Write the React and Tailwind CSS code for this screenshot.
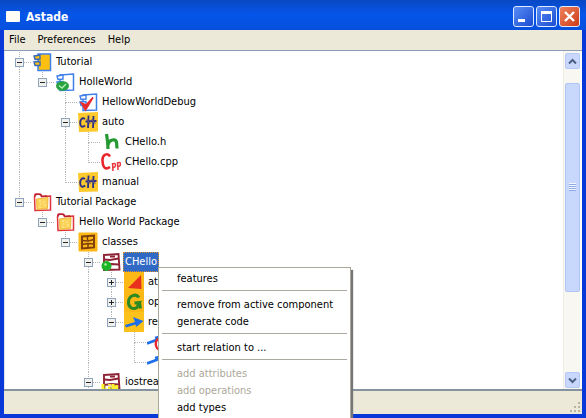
import React from "react";

const CppIcon = () => (
  <>
    <path d="M0 1 20 0v19.500L1 20z" fill="#fdc92c" />
    <path d="M7 7C4 5 2 8 2.200 11.500s2.300 4 5 2" fill="none" stroke="#2b2f86" strokeWidth="1.900" />
    <path d="m10.500 3.500-.5 12.500M15.500 4l-.5 12M7.500 9.500l11-.5" fill="none" stroke="#2b2f86" strokeWidth="1.800" />
    <path d="m8.500 7 4 5M13.500 7l4 5" fill="none" stroke="#6a5c7c" strokeWidth="1" />
  </>
);

const FolderIcon = () => (
  <>
    <path d="M2.500 5 3 2.500 8 2l1.500 2.500 9-.5V18L3 18.500z" fill="#fff" stroke="#e0343c" strokeWidth="1.500" />
    <path d="M4.500 7 16 5.500l-.5 11-10.500 1z" fill="#fbd25a" stroke="#f0b63a" />
    <path d="M3 4.500 4 2l5 .5 1 2 5-.5" fill="none" stroke="#b82036" strokeWidth="1.300" />
    <path d="M7 9h2M11 10h2M8 12h1M12 13h2M7 15h2" stroke="#fff0a8" />
  </>
);

const ComponentIcon = () => (
  <>
    <path d="M5 3 18.500 2v16L5 18.500z" fill="#fff" stroke="#3f80e8" strokeWidth="1.500" />
    <path d="m2 4 6-1v4l-5 .5zM2 10l6-.5v4H3z" fill="#fff" stroke="#3f80e8" strokeWidth="1.400" />
  </>
);

const ClassIcon = () => (
  <>
    <path d="M3 3 17.500 2l1 15.500L3 18z" fill="#fff" stroke="#8e2436" strokeWidth="1.900" />
    <path d="m3 7.500 6 .5 8.500-1.500M3 13l7-1 8 .5M9 4.500h5" fill="none" stroke="#8e2436" strokeWidth="1.800" />
  </>
);

const ICONS = {
  project: (
    <>
      <path d="M6 2h12.500v16.500H6z" fill="#fdc010" stroke="#3f80e8" strokeWidth="1.500" />
      <path d="m2 4 6-1v4l-5 .5zM2 10l6-.5v4H3z" fill="#fdc010" stroke="#3468b8" strokeWidth="1.400" />
    </>
  ),
  component: (
    <>
      <ComponentIcon />
      <ellipse cx="7.500" cy="14" rx="6.500" ry="4.800" fill="#27a340" />
      <path d="m4 13.500 3 2.500 4-4" fill="none" stroke="#b4ecb8" strokeWidth="1.400" />
    </>
  ),
  config: (
    <>
      <ComponentIcon />
      <path d="m3.500 11 4 7L15 5.500 8 13z" fill="#e82a2e" stroke="#e82a2e" strokeWidth="1.600" />
    </>
  ),
  cxx: <CppIcon />,
  header: (
    <path d="m5.500 2 1 7 .5 8M7 13c1-6 7.500-6.500 8.500-3l.5 6.500" fill="none" stroke="#259a33" strokeWidth="3.200" />
  ),
  source: (
    <>
      <path d="M9 4.500C7 .5 1 2 1.500 9s3 9 7.500 6" fill="none" stroke="#e8262c" strokeWidth="2.600" />
      <path d="m11.500 11 .5 8M11.500 12c3-2 4.500 2 1 3.500M16.500 10l.5 8M16.500 11c3-2 4.500 2 1 3.500" fill="none" stroke="#e8363c" strokeWidth="1.500" />
    </>
  ),
  folder: <FolderIcon />,
  classes: (
    <>
      <rect x="0.5" y="0.5" width="19" height="19" rx="1" fill="#fcb817" />
      <path d="m4 4.500 12-1v12L4 16.500z" fill="none" stroke="#7c3c0c" strokeWidth="1.900" />
      <path d="m4 8.500 6 .5 6-1.500M4 12.500l6-1 6 .5M9.500 5v3M10 12v3" fill="none" stroke="#7c3c0c" strokeWidth="1.500" />
    </>
  ),
  activeClass: (
    <>
      <ClassIcon />
      <circle cx="5.500" cy="14" r="5" fill="#1fb528" />
      <circle cx="4.500" cy="12.500" r="1.300" fill="#a8efa0" />
    </>
  ),
  attributes: (
    <>
      <rect width="20" height="20" fill="#fcb817" />
      <path d="m17 3 .5 14L4 16z" fill="#e8301c" />
    </>
  ),
  operations: (
    <>
      <rect width="20" height="20" fill="#fcb817" />
      <path d="M15 5.500C12 1 5 3.500 4.500 9.500S9 18 13 15.500l2.500-5-5 .5M15.500 10.500l1 6" fill="none" stroke="#2c8a20" strokeWidth="3" />
    </>
  ),
  relations: (
    <>
      <rect width="20" height="20" fill="#fcc21b" />
      <path d="m1 13 10-3-2-5 10.500 4-7.500 6-.5-2.500L2 15.500z" fill="#1d6fe8" />
    </>
  ),
  relationOut: (
    <>
      <path d="m0 11.500 8-3 5-2M8 6l4-1" stroke="#1d6fe8" strokeWidth="2.800" />
      <path d="M14 7C7 5 7 18 14 18" fill="none" stroke="#e8262c" strokeWidth="2.400" />
    </>
  ),
  relationIn: <path d="m0 11.500 8-3 5-2M8 6l4-1" stroke="#1d6fe8" strokeWidth="2.800" />,
  library: (
    <>
      <ClassIcon />
      <path d="M2 12v6h4M8.500 14.500V18M8.500 12v1M12 12v6h3.500v-3.500H12" fill="none" stroke="#fff22a" strokeWidth="3" />
      <path d="M4 12.500v4M10 14.500V18M14 12.500v1.500M17.500 15v3" fill="none" stroke="#80781c" strokeWidth="0.800" />
    </>
  ),
};

/* guides: one entry per ancestor column, then the node's own joint */
const ROWS = [
  { guides: ["tee"], icon: "project", label: "Tutorial", box: "minus" },
  { guides: ["bar", "end"], icon: "component", label: "HolleWorld", box: "minus" },
  { guides: ["bar", "none", "tee"], icon: "config", label: "HellowWorldDebug" },
  { guides: ["bar", "none", "tee"], icon: "cxx", label: "auto", box: "minus" },
  { guides: ["bar", "none", "bar", "tee"], icon: "header", label: "CHello.h" },
  { guides: ["bar", "none", "bar", "end"], icon: "source", label: "CHello.cpp" },
  { guides: ["bar", "none", "end"], icon: "cxx", label: "manual" },
  { guides: ["end"], icon: "folder", label: "Tutorial Package", box: "minus" },
  { guides: ["none", "end"], icon: "folder", label: "Hello World Package", box: "minus" },
  { guides: ["none", "none", "end"], icon: "classes", label: "classes", box: "minus" },
  { guides: ["none", "none", "none", "tee"], icon: "activeClass", label: "CHello", box: "minus", selected: true },
  { guides: ["none", "none", "none", "bar", "tee"], icon: "attributes", label: "at", box: "plus" },
  { guides: ["none", "none", "none", "bar", "tee"], icon: "operations", label: "op", box: "plus" },
  { guides: ["none", "none", "none", "bar", "end"], icon: "relations", label: "re", box: "minus" },
  { guides: ["none", "none", "none", "bar", "none", "tee"], icon: "relationOut", label: "" },
  { guides: ["none", "none", "none", "bar", "none", "end"], icon: "relationIn", label: "" },
  { guides: ["none", "none", "none", "tee"], icon: "library", label: "iostream", box: "minus" },
];

function Guide({ kind, box }) {
  const joint = kind === "tee" || kind === "end";
  const upper = kind === "none" ? "" : "border-l";
  const lower = kind === "bar" || kind === "tee" ? "border-l" : "";
  return (
    <span className="relative flex h-5 w-[23px] shrink-0 flex-col pl-[11px]">
      <span className={`h-[11px] border-dotted border-[#b4b4b4] ${upper} ${joint ? "border-b" : ""}`} />
      <span className={`h-[9px] border-dotted border-[#b4b4b4] ${lower}`} />
      {box && (
        <button
          type="button"
          aria-label={box === "plus" ? "Expand" : "Collapse"}
          className="absolute top-[6px] left-[7px] flex size-[9px] items-center justify-center border border-[#8ea4bc] bg-[#f1f0ea]"
        >
          <svg viewBox="0 0 5 5" className="size-[5px] shrink-0" shapeRendering="crispEdges" aria-hidden="true">
            <path d={box === "plus" ? "M0 2h5v1H0zM2 0h1v5H2z" : "M0 2h5v1H0z"} fill="#20242c" />
          </svg>
        </button>
      )}
    </span>
  );
}

function TreeRow({ row }) {
  const last = row.guides.length - 1;
  return (
    <li role="treeitem" aria-selected={!!row.selected} className="flex h-5 items-center whitespace-nowrap">
      {row.guides.map((kind, i) => (
        <Guide key={i} kind={kind} box={i === last ? row.box : undefined} />
      ))}
      <svg viewBox="0 0 20 20" className="ml-px size-5 shrink-0" aria-hidden="true">
        {ICONS[row.icon]}
      </svg>
      <span
        className={`ml-[2px] flex h-5 items-center ${
          row.selected ? "border border-dotted border-[#d9902f] bg-[#316ac5] px-px text-white" : "px-[2px]"
        }`}
      >
        {row.label}
      </span>
    </li>
  );
}

const MENU = [
  [{ label: "features" }],
  [{ label: "remove from active component" }, { label: "generate code" }],
  [{ label: "start relation to ..." }],
  [{ label: "add attributes", off: true }, { label: "add operations", off: true }, { label: "add types" }],
];

function ContextMenu() {
  return (
    <div
      role="menu"
      className="absolute top-[267px] bottom-0 left-[158px] w-[193px] border-t border-r border-l border-[#aca899] bg-white pt-[2px] shadow-[2px_3px_1px_#77777a]"
    >
      {MENU.map((group, g) => (
        <div key={g} role="group">
          {g > 0 && <hr className="mx-[3px] mt-[3px] mb-[5px] border-[#aca9a0]" />}
          {group.map((item) => (
            <button
              key={item.label}
              type="button"
              role="menuitem"
              disabled={item.off}
              className="flex h-[17px] w-full items-center pl-[18px] whitespace-nowrap disabled:text-[#aca899]"
            >
              {item.label}
            </button>
          ))}
        </div>
      ))}
    </div>
  );
}

function CaptionButton({ label, tone, children }) {
  return (
    <button
      type="button"
      aria-label={label}
      className={`flex size-[21px] items-center justify-center rounded-[3px] border border-[#dfe9ff] bg-linear-to-br ${tone}`}
    >
      <svg viewBox="0 0 19 19" className="size-[19px]" fill="none" stroke="#fff" aria-hidden="true">
        {children}
      </svg>
    </button>
  );
}

function ScrollButton({ label, d }) {
  return (
    <button
      type="button"
      aria-label={label}
      className="flex h-4 w-[15px] shrink-0 items-center justify-center rounded-[2px] border border-[#b5c8f4] bg-[#c8d7fb]"
    >
      <svg viewBox="0 0 9 7" className="h-[7px] w-[9px]" fill="none" stroke="#4d6185" strokeWidth="2" aria-hidden="true">
        <path d={d} />
      </svg>
    </button>
  );
}

export default function App() {
  return (
    <div className="relative flex h-screen flex-col overflow-hidden bg-[#0838d8] font-['DejaVu_Sans_Condensed','DejaVu_Sans',sans-serif] text-[11px] leading-[14px] text-black">
      <header className="flex h-[30px] shrink-0 items-center bg-linear-to-b from-[#0848c4] via-[#0555ea] to-[#0650dc] pt-[3px] pr-[6px] pl-[6px]">
        <span className="h-[11px] w-[14px] rounded-[1px] bg-[#fdfdf6]" />
        <h1 className="ml-[6px] flex-1 text-[12px] font-bold text-white">Astade</h1>
        <div className="flex gap-[2px]">
          <CaptionButton label="Minimize" tone="from-[#5a8cf5] to-[#1a4bd0]">
            <path d="M4 13.500h7" strokeWidth="3" />
          </CaptionButton>
          <CaptionButton label="Maximize" tone="from-[#5a8cf5] to-[#1a4bd0]">
            <path d="M4.500 5.500h10v9h-10z" />
            <path d="M4 5.500h11" strokeWidth="3" />
          </CaptionButton>
          <CaptionButton label="Close" tone="from-[#f0805c] to-[#cc3a10]">
            <path d="m5 5 9 9M14 5l-9 9" strokeWidth="2.400" />
          </CaptionButton>
        </div>
      </header>

      <div className="mr-[4px] mb-[4px] ml-[4px] flex min-h-0 flex-1 flex-col bg-[#ece9d8]">
        <nav className="flex h-5 shrink-0 items-center gap-3 pl-[5px]">
          <button type="button">File</button>
          <button type="button">Preferences</button>
          <button type="button">Help</button>
        </nav>

        <main className="flex min-h-0 flex-1 border-t border-b-2 border-t-[#8c9cb4] border-b-[#85939f] bg-white pr-[2px]">
          <ul role="tree" className="min-w-0 flex-1 overflow-hidden border-l border-[#dfe6f0] pt-px pl-[3px]">
            {ROWS.map((row, i) => (
              <TreeRow key={i} row={row} />
            ))}
          </ul>
          <div className="flex w-[17px] shrink-0 flex-col items-center border-l border-[#eeede5] bg-[#f8f7f2] pt-[2px] pb-px">
            <ScrollButton label="Scroll up" d="M1 5.500 4.500 2 8 5.500" />
            <div className="flex min-h-0 w-full flex-1 flex-col items-center pt-[14px] pb-20">
              <div className="flex w-[15px] flex-1 flex-col items-center justify-center gap-px rounded-[2px] border border-[#b0c4f2] bg-[#c8d7fc]">
                <span className="h-px w-[7px] bg-[#8ea9e6] shadow-[0_-1px_#f4f7ff]" />
                <span className="h-px w-[7px] bg-[#8ea9e6] shadow-[0_-1px_#f4f7ff]" />
                <span className="h-px w-[7px] bg-[#8ea9e6] shadow-[0_-1px_#f4f7ff]" />
                <span className="h-px w-[7px] bg-[#8ea9e6] shadow-[0_-1px_#f4f7ff]" />
              </div>
            </div>
            <ScrollButton label="Scroll down" d="M1 1.500 4.500 5 8 1.500" />
          </div>
        </main>

        <footer className="flex h-[23px] shrink-0 items-end justify-end p-px">
          <svg viewBox="0 0 12 12" className="size-3" fill="#b8b4a2" aria-hidden="true">
            <path d="M9 1h2v2H9zM9 5h2v2H9zM9 9h2v2H9zM5 5h2v2H5zM5 9h2v2H5zM1 9h2v2H1z" />
          </svg>
        </footer>
      </div>

      <ContextMenu />
    </div>
  );
}
